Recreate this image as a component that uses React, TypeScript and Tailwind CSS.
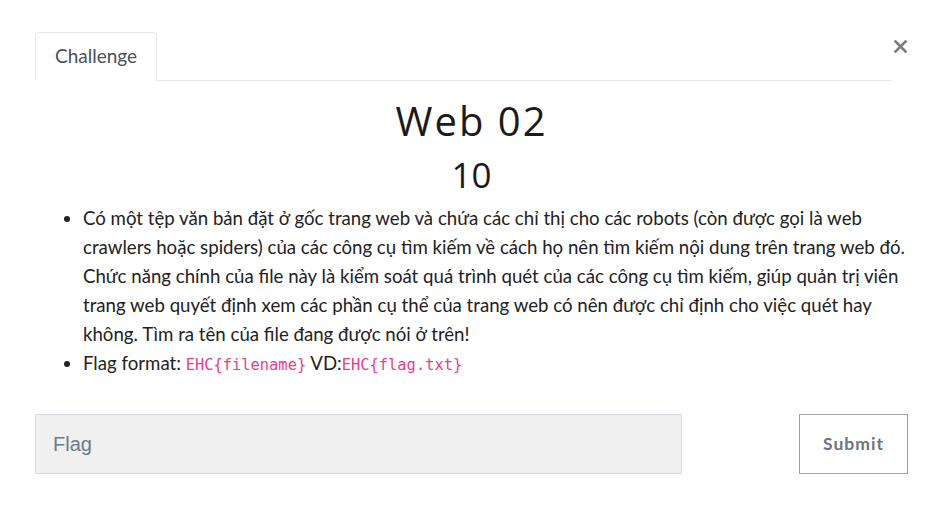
export default function App() {
  return (
    <div className="w-[940px] h-[524px] bg-white font-['Lato','Noto_Sans',sans-serif] text-[#212529]">
      <div className="pl-[35px] pr-[33px] pt-[32px] flex items-start">
        {/* Tabs */}
        <div className="flex-1 flex border-b border-[#e3e6ea]">
          <div className="-mb-px h-[49px] px-[19px] flex items-center border border-[#e3e6ea] border-b-white bg-white rounded-t-[4px] text-[19px] text-[#495057]">
            Challenge
          </div>
        </div>
        {/* Close */}
        <button className="ml-[2px] mt-[8px] text-[#7a7a7a]">
          <svg width="13" height="13" viewBox="0 0 13 13">
            <path d="M1.5 1.5 L11.5 11.5 M11.5 1.5 L1.5 11.5" stroke="currentColor" strokeWidth="2.6" strokeLinecap="square" />
          </svg>
        </button>
      </div>

      <div className="pl-[35px] pr-[32px]">
        <h1 className="mt-[16px] text-center text-[40px] leading-[48px] tracking-[2px] font-['Open_Sans',sans-serif] font-normal text-[#1b1b1b]">
          Web 02
        </h1>
        <div className="text-center text-[35px] leading-[60px] font-['Open_Sans',sans-serif] text-[#1b1b1b]">
          10
        </div>

        <ul className="mt-[-1px] pl-[48px] list-disc text-[18.65px] leading-[29px] text-[#222]">
          <li>
            Có một tệp văn bản đặt ở gốc trang web và chứa các chỉ thị cho các robots (còn được gọi là web crawlers hoặc spiders) của các công cụ tìm kiếm về cách họ nên tìm kiếm nội dung trên trang web đó. Chức năng chính của file này là kiểm soát quá trình quét của các công cụ tìm kiếm, giúp quản trị viên trang web quyết định xem các phần cụ thể của trang web có nên được chỉ định cho việc quét hay không. Tìm ra tên của file đang được nói ở trên!
          </li>
          <li>
            Flag format:{' '}
            <code className="font-['DejaVu_Sans_Mono',monospace] text-[15.4px] text-[#e83e8c]">EHC{'{filename}'}</code> VD:
            <code className="font-['DejaVu_Sans_Mono',monospace] text-[15.4px] text-[#e83e8c]">EHC{'{flag.txt}'}</code>
          </li>
        </ul>

        <div className="mt-[34px] flex items-center">
          <input
            placeholder="Flag"
            className="w-[647px] h-[60px] bg-[#f0f0f0] border border-[#d5dae0] px-[17px] text-[20px] font-['Liberation_Sans',sans-serif] placeholder:text-[#6c7a89] outline-none"
          />
          <div className="flex-1" />
          <button className="w-[109px] h-[60px] border border-[#9ea2a6] bg-white text-[17.5px] font-bold tracking-[1px] text-[#6c757d]">
            Submit
          </button>
        </div>
      </div>
    </div>
  );
}
